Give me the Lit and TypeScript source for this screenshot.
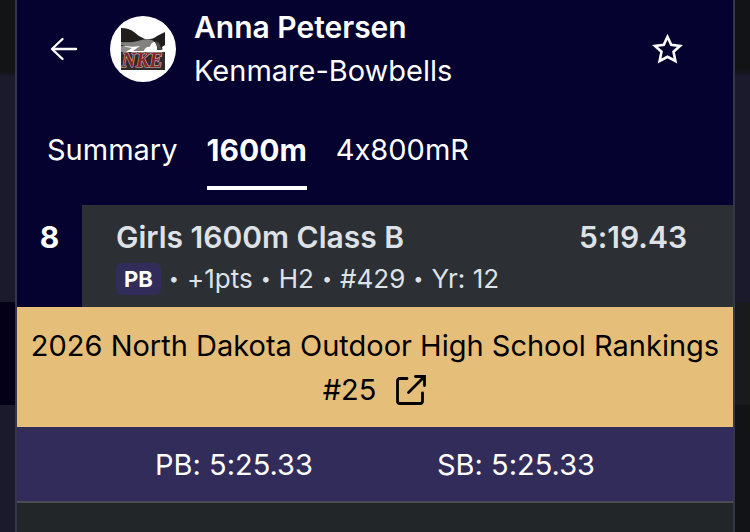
import { LitElement, html, css, svg } from 'lit';
import { customElement, property, state } from 'lit/decorators.js';
import { classMap } from 'lit/directives/class-map.js';

const backIcon = svg`
  <svg width="28" height="24" viewBox="0 0 28 24" fill="none" stroke="currentColor" stroke-width="2.4" stroke-linecap="round" stroke-linejoin="round" aria-hidden="true">
    <path d="M12.5 2 2 12l10.5 10M2.5 12H26" />
  </svg>`;

const starIcon = svg`
  <svg width="32" height="32" viewBox="0 0 32 32" fill="none" stroke="currentColor" stroke-width="2.6" stroke-miterlimit="10" aria-hidden="true">
    <path d="M16.500 3.800 20.200 11.800 29 12.900 22.500 18.700 24.400 28 16.500 23.800 8.600 28 10.500 18.700 4 12.900 12.800 11.800Z" />
  </svg>`;

const openIcon = svg`
  <svg width="32" height="32" viewBox="0 0 32 32" fill="none" stroke="currentColor" stroke-width="2.8" stroke-linecap="round" aria-hidden="true">
    <path d="M12 4.5H5Q2.5 4.5 2.5 7V27Q2.5 29.5 5 29.5H25Q27.5 29.5 27.5 27V19" />
    <path d="M13.5 18.5 29 3M20.5 2.5H29.5V11.5" />
  </svg>`;

@customElement('team-logo')
class TeamLogo extends LitElement {
  static styles = css`
    :host {
      display: flex;
      align-items: center;
      justify-content: center;
      flex: none;
      width: 66px;
      height: 66px;
      border-radius: 50%;
      background: #fff;
    }

    svg {
      display: block;
    }

    text {
      fill: #8a2422;
      stroke: #d8c8c4;
      stroke-width: 1px;
      paint-order: stroke;
      font: italic 700 20px "Liberation Serif", serif;
    }
  `;

  render() {
    return html`
      <svg width="44" height="42" viewBox="0 0 44 42" role="img" aria-label="NKE">
        <path d="M0 0Q8 0 13 4Q18 9 24 11Q31 12 36 8L44 4V19L41 22H35L31 16 20 15 0 19Z" fill="#211d1b" />
        <path d="M0 14Q9 15 17 13Q24 10 31 12L34 14L31 19Q26 18 23 23H12L19 18Q9 20 0 17Z" fill="#82817f" />
        <path d="M0 18 11 20 5 24H0Z" fill="#8e8c8a" />
        <path d="M22 24Q25 18 29 19Q30 14 34 14Q37 19 36 24Z" fill="#fff" />
        <path d="M34 13 38 15 41 22 37 21Z" fill="#55514f" />
        <path d="M41 19 44 17V24H42Z" fill="#fff" />
        <path d="M0 24H44V42H0Z" fill="#302a2a" />
        <text x="21" y="39" text-anchor="middle">NKE</text>
      </svg>
    `;
  }
}

@customElement('result-row')
class ResultRow extends LitElement {
  @property() place = '';
  @property() event = '';
  @property() mark = '';
  @property({ type: Array }) details: string[] = [];

  static styles = css`
    :host {
      display: flex;
      color: #dee2e6;
    }

    .place {
      flex: none;
      box-sizing: border-box;
      width: 65px;
      padding-top: 10px;
      background: #050230;
      color: #fff;
      font-size: 30px;
      font-weight: 700;
      line-height: 44px;
      text-align: center;
    }

    .result {
      flex: 1;
      padding: 10px 46px 8px 34px;
      background: #2c3035;
    }

    .title {
      display: flex;
      justify-content: space-between;
      font-size: 30px;
      font-weight: 600;
      line-height: 44px;
    }

    .details {
      display: flex;
      align-items: center;
      gap: 8px;
      font-size: 26px;
      line-height: 40px;
    }

    .dot {
      font-size: 18px;
    }

    .badge {
      padding: 0 8px;
      border-radius: 6px;
      background: #312c59;
      color: #fff;
      font-size: 22px;
      font-weight: 700;
      line-height: 32px;
    }
  `;

  render() {
    return html`
      <div class="place">${this.place}</div>
      <div class="result">
        <div class="title">
          <span>${this.event}</span>
          <span>${this.mark}</span>
        </div>
        <div class="details">
          <span class="badge">PB</span>
          ${this.details.map((item) => html`<span class="dot">•</span><span>${item}</span>`)}
        </div>
      </div>
    `;
  }
}

@customElement('app-root')
class AppRoot extends LitElement {
  @state() tab = '1600m';
  @state() favorite = false;

  tabs = ['Summary', '1600m', '4x800mR'];

  static styles = css`
    :host {
      display: flex;
      height: 100vh;
      overflow: hidden;
      background: #1b192c;
      font-family: Inter, "Liberation Sans", sans-serif;
      font-size: 29px;
      /* keeps the x in 4x800 a letter */
      font-variant-ligatures: no-contextual;
      color: #fff;
    }

    button {
      padding: 0;
      border: 0;
      background: none;
      color: inherit;
      font: inherit;
      font-variant-ligatures: inherit;
      cursor: pointer;
    }

    svg {
      display: block;
    }

    /* the dimmed page on both sides of the panel */
    .behind {
      flex: none;
      width: 15px;
      background: linear-gradient(#121415 72px, #1b192c 76px 302px, #040017 302px 405px, #1b192c 405px);
    }

    .behind.end {
      background: linear-gradient(#111314 70px, #1b192c 76px 302px, #191a1b 302px 405px, #111314 405px);
    }

    .panel {
      flex: 1;
      min-width: 0;
      border: solid #37354a;
      border-width: 0 2px;
      background: #222629;
    }

    header {
      padding: 5px 30px 15px;
      background: #050230;
    }

    .athlete {
      display: flex;
      align-items: center;
    }

    .back {
      margin: 0 32px 0 3px;
    }

    .who {
      flex: 1;
      padding-left: 18px;
    }

    h1 {
      margin: 0;
      font-size: 30px;
      font-weight: 600;
    }

    h1,
    .team {
      line-height: 44px;
    }

    .star {
      margin-right: 20px;
    }

    nav {
      display: flex;
      gap: 29px;
      padding-top: 35px;
    }

    .tab {
      padding-bottom: 14px;
      border-bottom: 4px solid transparent;
      line-height: 44px;
    }

    .tab.active {
      border-color: #fff;
      font-size: 30px;
      font-weight: 700;
    }

    .ranking {
      display: block;
      padding: 17px 8px 15px;
      background: #e5bf79;
      color: #000;
      line-height: 44px;
      text-align: center;
      text-decoration: none;
    }

    .rank {
      display: flex;
      align-items: center;
      justify-content: center;
      gap: 19px;
    }

    .bests {
      display: flex;
      justify-content: center;
      gap: 124px;
      padding: 16px 0 14px;
      border-bottom: 2px solid #4b4d56;
      background: #312c59;
      line-height: 44px;
    }
  `;

  render() {
    return html`
      <div class="behind"></div>
      <main class="panel">
        <header>
          <div class="athlete">
            <button class="back" aria-label="Back">${backIcon}</button>
            <team-logo></team-logo>
            <div class="who">
              <h1>Anna Petersen</h1>
              <div class="team">Kenmare-Bowbells</div>
            </div>
            <button
              class="star"
              aria-label="Favorite"
              aria-pressed=${this.favorite}
              @click=${() => (this.favorite = !this.favorite)}
            >${starIcon}</button>
          </div>
          <nav>
            ${this.tabs.map((name) => html`
              <button
                class=${classMap({ tab: true, active: name === this.tab })}
                @click=${() => (this.tab = name)}
              >${name}</button>
            `)}
          </nav>
        </header>
        <result-row
          place="8"
          event="Girls 1600m Class B"
          mark="5:19.43"
          .details=${['+1pts', 'H2', '#429', 'Yr: 12']}
        ></result-row>
        <a class="ranking" href="#rankings">
          2026 North Dakota Outdoor High School Rankings
          <span class="rank">#25 ${openIcon}</span>
        </a>
        <div class="bests">
          <span>PB: 5:25.33</span>
          <span>SB: 5:25.33</span>
        </div>
      </main>
      <div class="behind end"></div>
    `;
  }
}
